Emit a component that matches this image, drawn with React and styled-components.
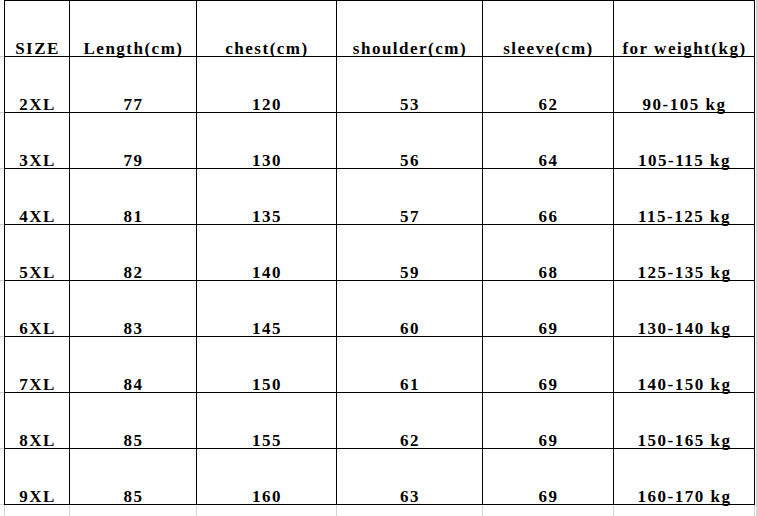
import React from 'react';
import styled, { createGlobalStyle } from 'styled-components';

const GlobalStyle = createGlobalStyle`
    html, body {
        margin: 0;
        padding: 0;
        background: #fff;
    }
    * {
        box-sizing: border-box;
    }
`;

const GRID = '#d4d4d4';
const INK = '#000';
const COLUMNS = '4px 66px 127px 140px 146px 131px 141px 1fr';

const Sheet = styled.div`
    width: 757px;
    height: 516px;
    overflow: hidden;
    display: flex;
    flex-direction: column;
    background: #fff;
    font-family: "Liberation Serif", "DejaVu Serif", serif;
    font-weight: bold;
    font-size: 17px;
    letter-spacing: 1.5px;
    color: #000;
`;

const SheetRow = styled.div`
    display: grid;
    grid-template-columns: ${COLUMNS};
    height: ${p => p.$height}px;
    flex: none;
`;

const Gutter = styled.div`
    border-bottom: 1px solid ${p => (p.$line ? GRID : 'transparent')};
`;

const Cell = styled.div`
    display: flex;
    align-items: flex-end;
    justify-content: center;
    white-space: nowrap;
    line-height: 15px;
    padding-left: 1px;
    border-right: 1px solid ${INK};
    border-bottom: 1px solid ${INK};
    border-top: ${p => (p.$top ? `1px solid ${INK}` : 'none')};
    border-left: ${p => (p.$first ? `1px solid ${INK}` : 'none')};
`;

const Tail = styled.div`
    margin-left: 1px;
    border-left: 1px solid ${GRID};
    border-bottom: 1px solid ${GRID};
`;

const Stub = styled.div`
    border-right: 1px solid ${GRID};
    border-left: ${p => (p.$first ? `1px solid ${GRID}` : 'none')};
`;

const header = ['SIZE', 'Length(cm)', 'chest(cm)', 'shoulder(cm)', 'sleeve(cm)', 'for weight(kg)'];

const rows = [
    ['2XL', '77', '120', '53', '62', '90-105 kg'],
    ['3XL', '79', '130', '56', '64', '105-115 kg'],
    ['4XL', '81', '135', '57', '66', '115-125 kg'],
    ['5XL', '82', '140', '59', '68', '125-135 kg'],
    ['6XL', '83', '145', '60', '69', '130-140 kg'],
    ['7XL', '84', '150', '61', '69', '140-150 kg'],
    ['8XL', '85', '155', '62', '69', '150-165 kg'],
    ['9XL', '85', '160', '63', '69', '160-170 kg'],
];

function TableRow({ values, top }) {
    return (
        <SheetRow $height={top ? 57 : 56}>
            <Gutter $line />
            {values.map((v, i) => (
                <Cell key={i} $top={top} $first={i === 0}>{v}</Cell>
            ))}
            <Tail />
        </SheetRow>
    );
}

export default function App() {
    return (
        <>
            <GlobalStyle />
            <Sheet>
                <TableRow values={header} top />
                {rows.map((r) => (
                    <TableRow key={r[0]} values={r} />
                ))}
                <SheetRow $height={11}>
                    <Gutter />
                    {header.map((h, i) => (
                        <Stub key={h} $first={i === 0} />
                    ))}
                    <Tail />
                </SheetRow>
            </Sheet>
        </>
    );
}
